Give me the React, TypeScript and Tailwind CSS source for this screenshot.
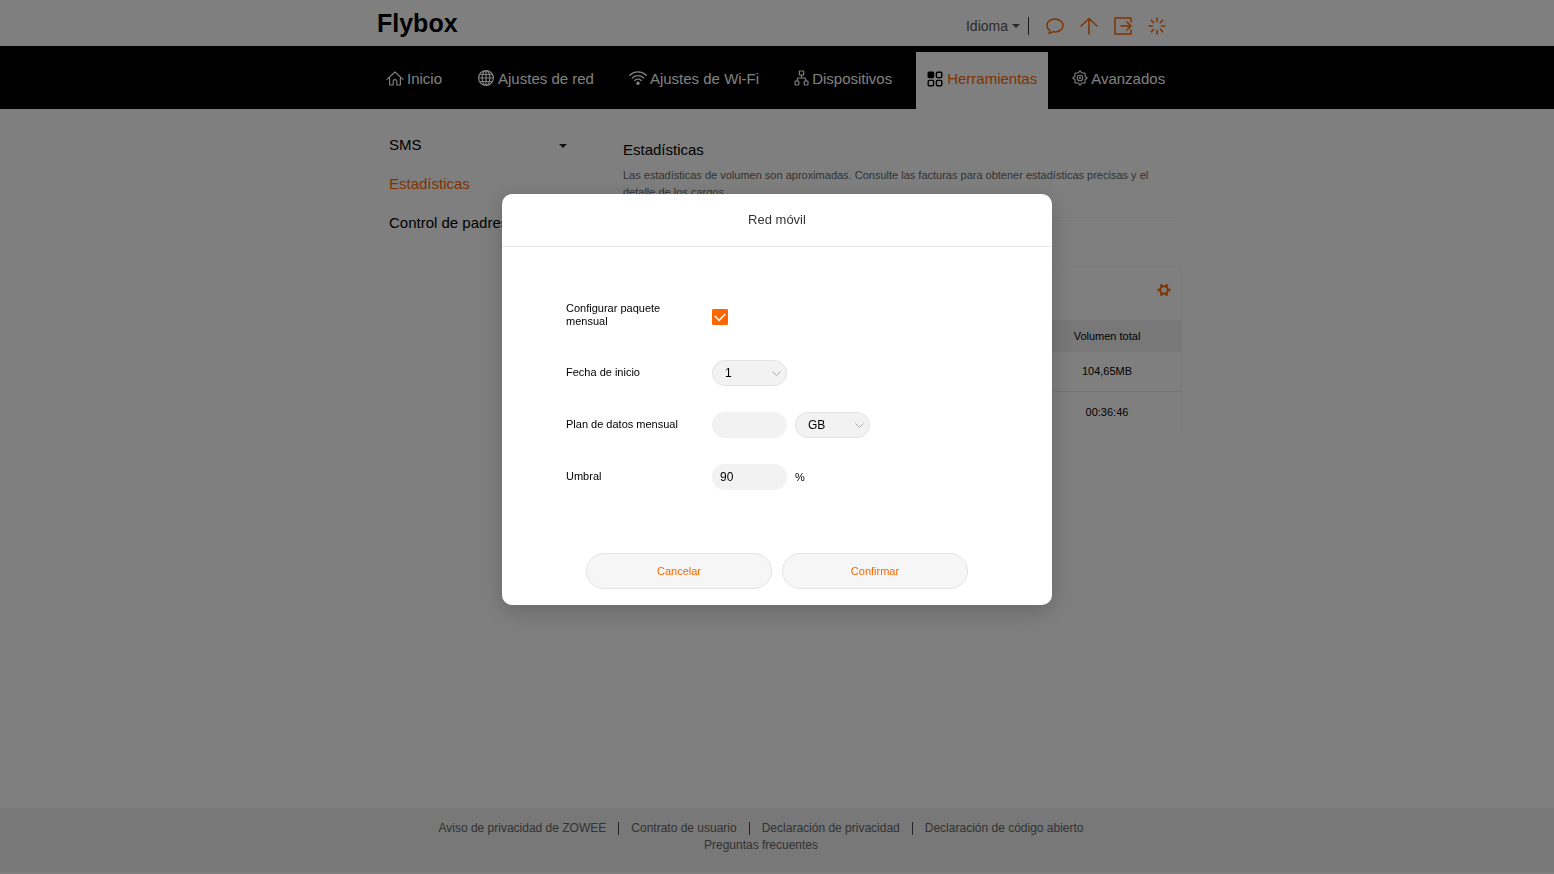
import { useState } from "react";
import type { ReactNode } from "react";

const iconProps = {
  width: 18,
  height: 18,
  viewBox: "0 0 18 18",
  fill: "none",
  stroke: "currentColor",
  strokeLinecap: "round",
  strokeLinejoin: "round",
  "aria-hidden": true,
} as const;

function HomeIcon() {
  return (
    <svg {...iconProps} strokeWidth={1.2}>
      <path d="M1 9.4 9 2l8 7.4M3.6 8v7h3.6v-3.6a1.8 1.8 0 0 1 3.6 0V15h3.6V8" />
    </svg>
  );
}

function GlobeIcon() {
  return (
    <svg {...iconProps} strokeWidth={1.2}>
      <circle cx="9" cy="8" r="7.4" />
      <ellipse cx="9" cy="8" rx="3.8" ry="7.4" />
      <path d="M9 .6v14.800M1.600 8h14.800M2.600 4.500h12.800M2.600 11.500h12.800" />
    </svg>
  );
}

function WifiIcon() {
  return (
    <svg {...iconProps} strokeWidth={1.4}>
      <path d="M.8 5.200c4.600-4.400 11.800-4.400 16.400 0M3.300 7.900c3.200-3 8.200-3 11.400 0M5.800 10.500c1.800-1.600 4.600-1.600 6.400 0" />
      <circle cx="9" cy="13.3" r="1.1" fill="currentColor" />
    </svg>
  );
}

function DevicesIcon() {
  return (
    <svg {...iconProps} width={15} viewBox="0 0 15 18" strokeWidth={1.2}>
      <rect x="5.4" y="1" width="4.2" height="4" />
      <rect x="1" y="11" width="3.8" height="4" rx=".8" />
      <rect x="10.2" y="11" width="3.8" height="4" rx=".8" />
      <path d="M7.5 5v3M2.9 11l1-3h7.200l1 3" />
    </svg>
  );
}

function ToolsIcon() {
  return (
    <svg {...iconProps} width={16} viewBox="0 0 16 18" strokeWidth={1.4}>
      <rect x="1.2" y="1.2" width="5.4" height="5.4" rx="1" fill="currentColor" />
      <rect x="9.4" y="1.2" width="5.4" height="5.4" rx="1" />
      <rect x="1.2" y="9.4" width="5.4" height="5.4" rx="1" />
      <rect x="9.4" y="9.4" width="5.4" height="5.4" rx="1" />
    </svg>
  );
}

function AdvancedIcon() {
  return (
    <svg {...iconProps} width={16} viewBox="0 0 16 18" strokeWidth={1.1}>
      <path d="M8 .8 9.800 3 13 3l0 3.200L15.200 8 13 9.800 13 13 9.800 13 8 15.200 6.200 13 3 13 3 9.800.8 8 3 6.200 3 3 6.200 3Z" />
      <circle cx="8" cy="8" r="2.8" />
      <circle cx="8" cy="8" r=".6" />
    </svg>
  );
}

function ChatIcon() {
  return (
    <svg {...iconProps} strokeWidth={1.4}>
      <path d="M3.7 13.4C2 12.2 1 10.500 1 8.500 1 4.900 4.600 2 9 2s8 2.900 8 6.500S13.400 15 9 15c-.8 0-1.600-.1-2.300-.3-.9.9-2.300 1.500-3.900 1.600.8-.8 1.100-1.800.9-2.900Z" />
    </svg>
  );
}

function UploadIcon() {
  return (
    <svg {...iconProps} strokeWidth={1.5}>
      <path d="M9 17V1.500M1 9l8-7.500L17 9" />
    </svg>
  );
}

function LogoutIcon() {
  return (
    <svg {...iconProps} strokeWidth={1.5}>
      <path d="M17 5V1H1v16h16v-4M7 9h10M13 5l4 4-4 4" />
    </svg>
  );
}

function RestartIcon() {
  return (
    <svg {...iconProps} strokeWidth={1.5}>
      <path d="M9 1v3.500M9 13.500V17M1 9h3.500M13.500 9H17M3.300 3.300l2.300 2.300M12.400 12.400l2.300 2.300M3.300 14.700l2.300-2.300M12.400 5.600l2.300-2.300" />
    </svg>
  );
}

function CogIcon() {
  return (
    <svg width="14" height="14" viewBox="0 0 14 14" fill="none" stroke="currentColor" aria-hidden>
      <circle cx="7" cy="7" r="3.8" strokeWidth="2" />
      <path
        d="M11.500 7h2M9.250 10.900l1 1.700M4.750 10.900l-1 1.700M2.500 7h-2M4.750 3.100l-1-1.700M9.250 3.100l1-1.700"
        strokeWidth="2.4"
      />
    </svg>
  );
}

function Caret() {
  return (
    <svg width="8" height="4" viewBox="0 0 8 4" fill="currentColor" aria-hidden>
      <path d="M0 0h8L4 4Z" />
    </svg>
  );
}

const navItems = [
  { label: "Inicio", icon: <HomeIcon /> },
  { label: "Ajustes de red", icon: <GlobeIcon /> },
  { label: "Ajustes de Wi-Fi", icon: <WifiIcon /> },
  { label: "Dispositivos", icon: <DevicesIcon /> },
  { label: "Herramientas", icon: <ToolsIcon />, active: true },
  { label: "Avanzados", icon: <AdvancedIcon /> },
];

const footerLinks = [
  "Aviso de privacidad de ZOWEE",
  "Contrato de usuario",
  "Declaración de privacidad",
  "Declaración de código abierto",
];

const actions = [
  { label: "Mensajes", icon: <ChatIcon /> },
  { label: "Actualizar", icon: <UploadIcon /> },
  { label: "Cerrar sesión", icon: <LogoutIcon /> },
  { label: "Reiniciar", icon: <RestartIcon /> },
];

function Header() {
  return (
    <header className="mx-auto flex h-[46px] w-full max-w-[800px] items-center justify-between pr-[11px]">
      <span className="text-[25px] leading-[30px] font-bold text-black">Flybox</span>
      <div className="flex items-center pt-[5px]">
        <button type="button" className="flex items-center gap-1 text-sm text-[#555]">
          Idioma
          <Caret />
        </button>
        <span className="mr-[17px] ml-2 h-[18px] w-px bg-[#333]" />
        <div className="flex gap-4 text-[#ff6600]">
          {actions.map((action) => (
            <button key={action.label} type="button" aria-label={action.label}>
              {action.icon}
            </button>
          ))}
        </div>
      </div>
    </header>
  );
}

function Nav() {
  return (
    <nav className="bg-black">
      <div className="mx-auto flex h-[63px] w-full max-w-[800px] items-end gap-[35px] px-[9px] pt-[6px]">
        {navItems.map((item) =>
          item.active ? (
            <a
              key={item.label}
              href="#"
              className="-mx-[11px] flex h-full items-center gap-1 bg-white px-[11px] pb-[2px] text-[15px] whitespace-nowrap text-[#ff6600]"
            >
              <span className="text-black">{item.icon}</span>
              {item.label}
            </a>
          ) : (
            <a
              key={item.label}
              href="#"
              className="flex h-full items-center gap-[3px] pb-[3px] text-[15px] whitespace-nowrap text-white"
            >
              {item.icon}
              {item.label}
            </a>
          ),
        )}
      </div>
    </nav>
  );
}

function Sidebar() {
  return (
    <aside className="w-[251px] shrink-0 pt-[17px] pl-[17px] text-[15px] text-black">
      <a href="#" className="flex h-[39px] w-[178px] items-center justify-between">
        SMS
        <span className="text-[#222]">
          <Caret />
        </span>
      </a>
      <a href="#" className="flex h-[39px] items-center text-[#ff6600]">
        Estadísticas
      </a>
      <a href="#" className="flex h-[39px] items-center">
        Control de padres
      </a>
    </aside>
  );
}

function Statistics() {
  return (
    <main className="min-w-0 flex-1 pt-[31px]">
      <h1 className="text-[15px] leading-5 text-black">Estadísticas</h1>
      <p className="mt-[7px] pr-1 text-[11px] leading-[17px] text-[#666]">
        Las estadísticas de volumen son aproximadas. Consulte las facturas para obtener estadísticas
        precisas y el detalle de los cargos.
      </p>
      <div className="mt-4 h-[49px] border-t border-[#f4f4f4]" />
      <section className="border-t border-r border-[#f4f4f4]">
        <div className="flex h-[53px] items-center justify-end pr-[10px] pb-2 text-[#ff6600]">
          <button type="button" aria-label="Configurar red móvil">
            <CogIcon />
          </button>
        </div>
        <table className="w-full table-fixed text-center text-[11px] text-black">
          <thead>
            <tr className="h-8 bg-[#f0f0f0]">
              <td />
              <td />
              <td />
              <th scope="col" className="w-[148px] font-normal">
                Volumen total
              </th>
            </tr>
          </thead>
          <tbody>
            <tr className="h-[39px] border-b border-[#e8e8e8]">
              <td />
              <td />
              <td />
              <td>104,65MB</td>
            </tr>
            <tr className="h-[41px]">
              <td />
              <td />
              <td />
              <td>00:36:46</td>
            </tr>
          </tbody>
        </table>
      </section>
    </main>
  );
}

function Footer() {
  return (
    <footer className="mb-[2px] bg-[#f0f0f0] pt-3 pb-[18px] text-xs leading-[17px] text-[#666]">
      <div className="mx-auto flex w-full max-w-[800px] flex-col items-center pr-8">
        <ul className="flex justify-center">
          {footerLinks.map((link) => (
            <li key={link} className="flex items-center">
              <a href="#" className="px-3 whitespace-nowrap">
                {link}
              </a>
              {link !== footerLinks[footerLinks.length - 1] && (
                <span className="h-[13px] w-px bg-[#444]" />
              )}
            </li>
          ))}
        </ul>
        <a href="#">Preguntas frecuentes</a>
      </div>
    </footer>
  );
}

function FormRow({ id, label, children }: { id: string; label: string; children: ReactNode }) {
  return (
    <div className="flex h-[26px] items-center gap-4">
      <label htmlFor={id} className="w-[130px] pb-[2px] leading-[13px]">
        {label}
      </label>
      <div className="flex items-center gap-2">{children}</div>
    </div>
  );
}

function SelectBox({ id, label, options }: { id: string; label?: string; options: string[] }) {
  return (
    <div className="relative">
      <select
        id={id}
        aria-label={label}
        className="h-[26px] w-[75px] appearance-none rounded-full border border-[#e3e3e3] bg-[#f2f2f2] pl-3 text-xs text-black"
      >
        {options.map((option) => (
          <option key={option}>{option}</option>
        ))}
      </select>
      <svg
        className="pointer-events-none absolute top-[11px] right-[6px] text-[#aaa]"
        width="9"
        height="5"
        viewBox="0 0 9 5"
        fill="none"
        stroke="currentColor"
        aria-hidden
      >
        <path d="M.5.5l4 4 4-4" />
      </svg>
    </div>
  );
}

function MobileNetworkDialog() {
  const [enabled, setEnabled] = useState(true);
  const [plan, setPlan] = useState("");
  const [threshold, setThreshold] = useState("90");

  return (
    <div className="fixed inset-0 z-10 flex items-start justify-center bg-black/50 pt-[194px]">
      <div
        role="dialog"
        aria-modal="true"
        aria-labelledby="dialog-title"
        className="w-full max-w-[550px] rounded-[10px] bg-white text-[11px] text-black shadow-[0_6px_24px_rgba(0,0,0,0.2)]"
      >
        <h2
          id="dialog-title"
          className="flex h-[53px] items-center justify-center border-b border-[#eaeaea] text-[13px] text-[#333]"
        >
          Red móvil
        </h2>
        <form>
          <div className="flex flex-col gap-[26px] px-16 pt-14 pb-[63px]">
            <div className="mb-[5px]">
              <FormRow id="monthly" label="Configurar paquete mensual">
                <span className="mt-[2px] grid size-4 place-items-center">
                  <input
                    id="monthly"
                    type="checkbox"
                    checked={enabled}
                    onChange={(e) => setEnabled(e.target.checked)}
                    className="col-start-1 row-start-1 size-4 appearance-none rounded-[1px] border border-[#ccc] checked:border-[#ff6600] checked:bg-[#ff6600]"
                  />
                  {enabled && (
                    <svg
                      className="pointer-events-none col-start-1 row-start-1"
                      width="12"
                      height="9"
                      viewBox="0 0 12 9"
                      fill="none"
                      stroke="#fff"
                      strokeWidth="1.5"
                      aria-hidden
                    >
                      <path d="M.7 2.800 5 7.400 11.300 1" />
                    </svg>
                  )}
                </span>
              </FormRow>
            </div>
            <FormRow id="start" label="Fecha de inicio">
              <SelectBox id="start" options={["1", "2", "3", "4", "5"]} />
            </FormRow>
            <FormRow id="plan" label="Plan de datos mensual">
              <input
                id="plan"
                type="text"
                value={plan}
                onChange={(e) => setPlan(e.target.value)}
                className="h-[26px] w-[75px] rounded-full bg-[#f2f2f2] px-2 text-xs"
              />
              <SelectBox id="unit" label="Unidad" options={["GB", "MB"]} />
            </FormRow>
            <FormRow id="threshold" label="Umbral">
              <input
                id="threshold"
                type="text"
                value={threshold}
                onChange={(e) => setThreshold(e.target.value)}
                className="h-[26px] w-[75px] rounded-full bg-[#f2f2f2] px-2 text-xs"
              />
              <span>%</span>
            </FormRow>
          </div>
          <div className="flex justify-center gap-[10px] pb-4 text-[#ff6600]">
            <button
              type="button"
              className="h-9 w-[186px] rounded-full border border-[#e3e3e3] bg-[#f6f6f6]"
            >
              Cancelar
            </button>
            <button
              type="button"
              className="h-9 w-[186px] rounded-full border border-[#e3e3e3] bg-[#f6f6f6]"
            >
              Confirmar
            </button>
          </div>
        </form>
      </div>
    </div>
  );
}

export default function App() {
  return (
    <div className="flex min-h-screen flex-col bg-white font-['Liberation_Sans',Arial,sans-serif]">
      <Header />
      <Nav />
      <div className="mx-auto flex w-full max-w-[810px] flex-1">
        <Sidebar />
        <Statistics />
      </div>
      <Footer />
      <MobileNetworkDialog />
    </div>
  );
}
